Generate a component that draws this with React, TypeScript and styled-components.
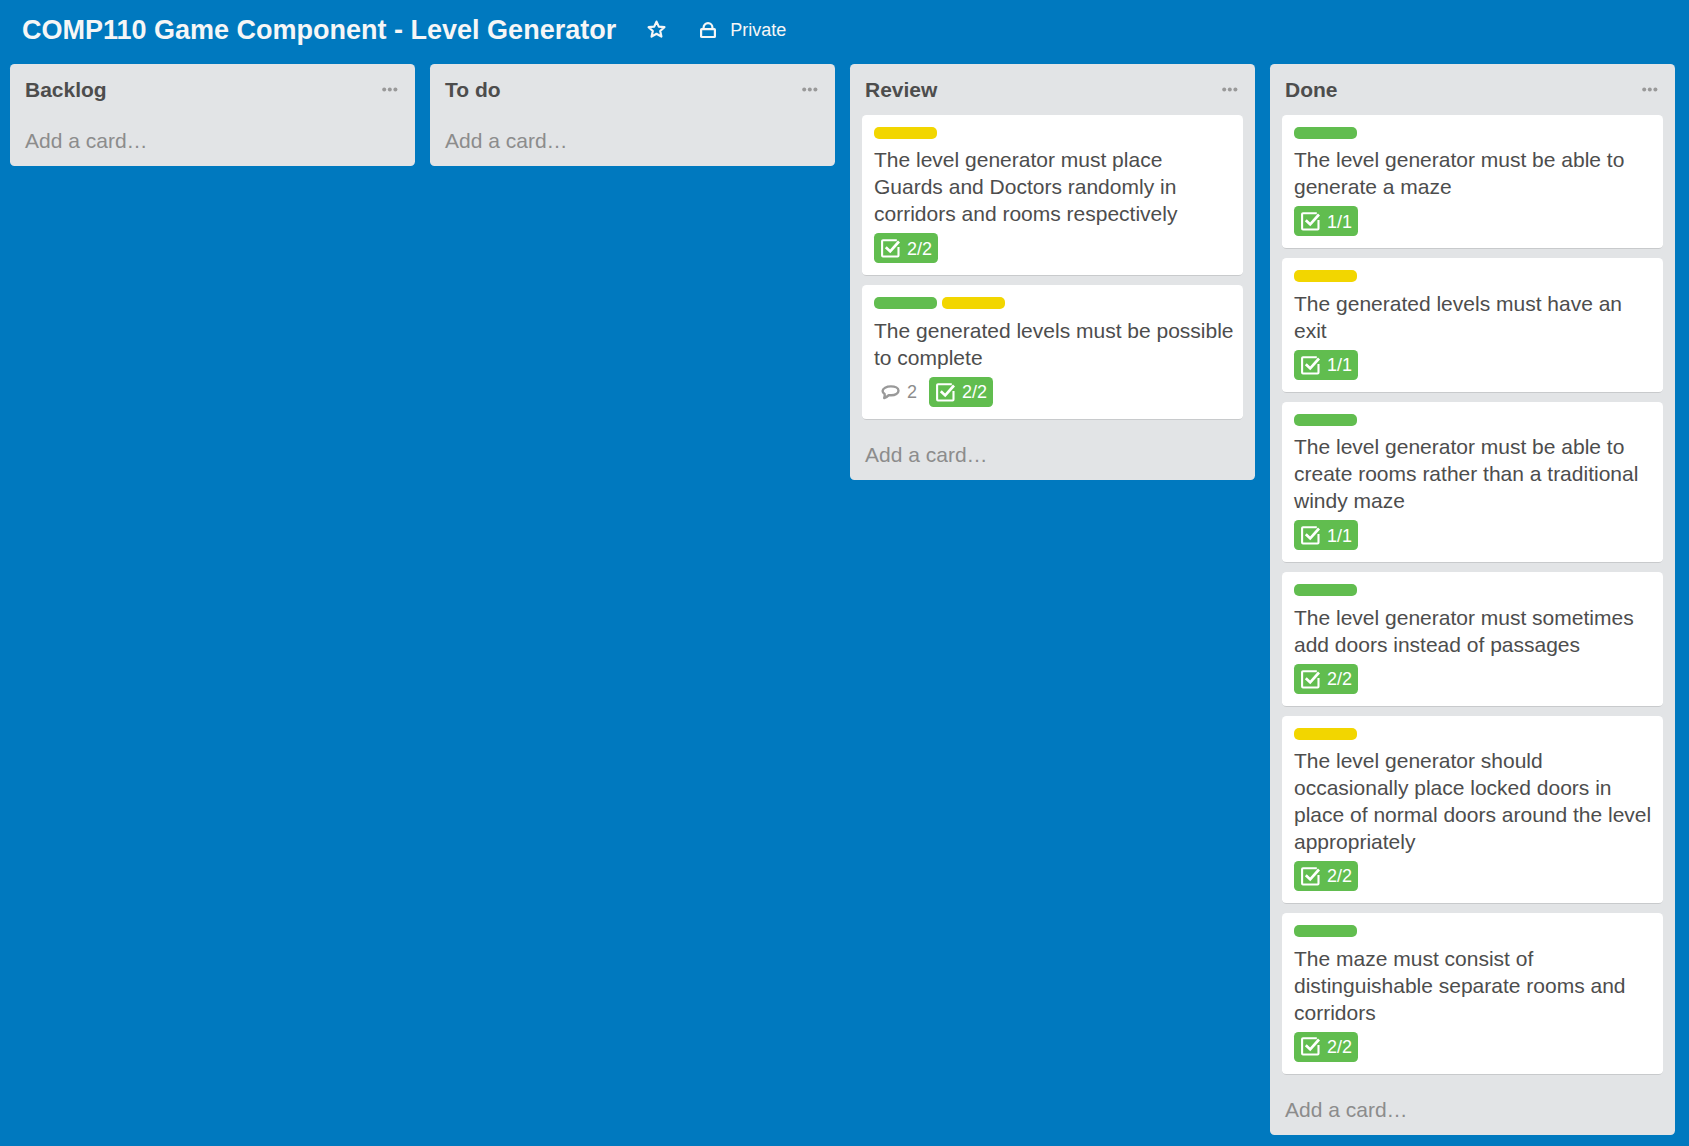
import React from 'react';
import styled, { createGlobalStyle } from 'styled-components';

type LabelColor = 'green' | 'yellow';

interface CardData {
  labels: LabelColor[];
  title: string;
  comments?: number;
  checklist: string;
}

interface ListData {
  name: string;
  cards: CardData[];
}

const labelColors: Record<LabelColor, string> = {
  green: '#61bd4f',
  yellow: '#f2d600',
};

const lists: ListData[] = [
  { name: 'Backlog', cards: [] },
  { name: 'To do', cards: [] },
  {
    name: 'Review',
    cards: [
      {
        labels: ['yellow'],
        title: 'The level generator must place Guards and Doctors randomly in corridors and rooms respectively',
        checklist: '2/2',
      },
      {
        labels: ['green', 'yellow'],
        title: 'The generated levels must be possible to complete',
        comments: 2,
        checklist: '2/2',
      },
    ],
  },
  {
    name: 'Done',
    cards: [
      { labels: ['green'], title: 'The level generator must be able to generate a maze', checklist: '1/1' },
      { labels: ['yellow'], title: 'The generated levels must have an exit', checklist: '1/1' },
      {
        labels: ['green'],
        title: 'The level generator must be able to create rooms rather than a traditional windy maze',
        checklist: '1/1',
      },
      {
        labels: ['green'],
        title: 'The level generator must sometimes add doors instead of passages',
        checklist: '2/2',
      },
      {
        labels: ['yellow'],
        title:
          'The level generator should occasionally place locked doors in place of normal doors around the level appropriately',
        checklist: '2/2',
      },
      {
        labels: ['green'],
        title: 'The maze must consist of distinguishable separate rooms and corridors',
        checklist: '2/2',
      },
    ],
  },
];

const GlobalStyle = createGlobalStyle`
  * {
    box-sizing: border-box;
  }

  body {
    margin: 0;
    background: #0079bf;
    color: #4d4d4d;
    font-family: 'Liberation Sans', Arial, sans-serif;
    font-size: 21px;
    line-height: 27px;
    overflow: hidden;
  }
`;

const Board = styled.main`
  display: flex;
  flex-direction: column;
  height: 1146px;
`;

const BoardHeader = styled.header`
  display: flex;
  align-items: center;
  height: 64px;
  padding: 0 22px 5px;
  color: #f6f6f6;
`;

const BoardTitle = styled.h1`
  margin: 0;
  font-size: 27px;
  line-height: 36px;
  white-space: nowrap;
`;

const StarButton = styled.button`
  display: flex;
  margin: 0 0 0 31px;
  padding: 0;
  border: 0;
  background: none;
  color: inherit;
`;

const Visibility = styled.div`
  display: flex;
  align-items: center;
  gap: 14.5px;
  margin-left: 33.5px;
  padding-top: 1px;
  font-size: 18px;
`;

const Lists = styled.div`
  display: flex;
  align-items: flex-start;
  gap: 15px;
  padding: 0 10px;
`;

const ListColumn = styled.section`
  flex: none;
  width: 405px;
  padding: 0 12px;
  border-radius: 4.5px;
  background: #e2e4e6;
`;

const ListHeader = styled.header`
  display: flex;
  justify-content: space-between;
  height: 51px;
  padding: 12px 5px 0 3px;
`;

const ListName = styled.h2`
  margin: 0;
  font-size: 21px;
  line-height: 27px;
`;

const MenuButton = styled.button`
  display: flex;
  align-self: flex-start;
  margin: 10.5px 0 0;
  padding: 0;
  border: 0;
  background: none;
  color: #999;
`;

const CardItem = styled.article`
  margin-bottom: 9px;
  padding: 12px 9px 12px 12px;
  border-bottom: 1px solid #c8cacc;
  border-radius: 4.5px;
  background: #fff;
`;

const Labels = styled.div`
  display: flex;
  gap: 5px;
  margin-bottom: 7.45px;
`;

const Label = styled.span<{ $color: LabelColor }>`
  width: 63px;
  height: 12px;
  border-radius: 5px;
  background: ${({ $color }) => labelColors[$color]};
`;

const CardTitle = styled.p`
  margin: 0 0 6px;
`;

const Badges = styled.div`
  display: flex;
  gap: 6px;
`;

const Badge = styled.span<{ $complete?: boolean }>`
  display: flex;
  align-items: center;
  gap: 7px;
  height: 30px;
  padding: 0.5px 6px 0 7px;
  border-radius: 4.5px;
  background: ${({ $complete }) => ($complete ? '#61bd4f' : 'transparent')};
  color: ${({ $complete }) => ($complete ? '#fff' : '#8c8c8c')};
  font-size: 18px;
  line-height: 30px;
`;

const AddCard = styled.div`
  height: 51.4px;
  padding: 12.4px 3px 0;
  color: #8c8c8c;
`;

const StarIcon = () => (
  <svg width="19" height="19" viewBox="0 0 19 19" fill="none" stroke="currentColor" strokeWidth="2.2" strokeLinejoin="round">
    <path d="M9.5 1.6l2.3 5 5.6.6-4.2 3.8 1.2 5.6-4.9-2.8-4.9 2.8 1.2-5.6-4.2-3.8 5.6-.6z" />
  </svg>
);

const LockIcon = () => (
  <svg width="16" height="17" viewBox="0 0 16 17" fill="none" stroke="currentColor" strokeWidth="2.2" strokeLinejoin="round">
    <rect x="1.1" y="7.1" width="13.8" height="7.9" rx="0.6" />
    <path d="M3.6 7V5.6C3.6 3.2 5.4 1.2 8 1.2s4.4 2 4.4 4.4V7" />
  </svg>
);

const DotsIcon = () => (
  <svg width="16" height="5" viewBox="0 0 16 5" fill="currentColor">
    <circle cx="2.2" cy="2.5" r="2" />
    <circle cx="7.8" cy="2.5" r="2" />
    <circle cx="13.4" cy="2.5" r="2" />
  </svg>
);

const CommentIcon = () => (
  <svg width="19" height="19" viewBox="0 0 19 19" fill="none" stroke="#999" strokeWidth="2.4" strokeLinejoin="round">
    <path d="M9.9 3.4c4.3 0 7.6 1.7 7.6 4.3s-3.3 4.6-7.2 4.6c-.9 0-1.7-.1-2.5-.2-1.2 1.3-2.9 2.4-4.6 2.9.6-1.4.7-2.7.4-4-1.3-.8-2-1.8-2-2.9 0-2.8 3.900-4.700 8.300-4.700z" />
  </svg>
);

const ChecklistIcon = () => (
  <svg width="19" height="19" viewBox="0 0 19 19" fill="none" stroke="currentColor" strokeWidth="2.1">
    <path d="M15.8 1.2H2c-.6 0-.9.3-.9.9v14.5c0 .6.3.9.9.9h14.6c.6 0 .9-.3.9-.9V7.9" strokeLinejoin="round" />
    <path d="M4.8 8.2l4.4 4.2L18 2.5" strokeWidth="2.7" />
  </svg>
);

const Card = ({ card }: { card: CardData }) => (
  <CardItem>
    <Labels>
      {card.labels.map((color) => (
        <Label key={color} $color={color} />
      ))}
    </Labels>
    <CardTitle>{card.title}</CardTitle>
    <Badges>
      {card.comments !== undefined && (
        <Badge>
          <CommentIcon />
          {card.comments}
        </Badge>
      )}
      <Badge $complete>
        <ChecklistIcon />
        {card.checklist}
      </Badge>
    </Badges>
  </CardItem>
);

const List = ({ list }: { list: ListData }) => (
  <ListColumn>
    <ListHeader>
      <ListName>{list.name}</ListName>
      <MenuButton aria-label="List actions">
        <DotsIcon />
      </MenuButton>
    </ListHeader>
    {list.cards.map((card) => (
      <Card key={card.title} card={card} />
    ))}
    <AddCard>Add a card…</AddCard>
  </ListColumn>
);

export default function App() {
  return (
    <Board>
      <GlobalStyle />
      <BoardHeader>
        <BoardTitle>COMP110 Game Component - Level Generator</BoardTitle>
        <StarButton aria-label="Star board">
          <StarIcon />
        </StarButton>
        <Visibility>
          <LockIcon />
          Private
        </Visibility>
      </BoardHeader>
      <Lists>
        {lists.map((list) => (
          <List key={list.name} list={list} />
        ))}
      </Lists>
    </Board>
  );
}
